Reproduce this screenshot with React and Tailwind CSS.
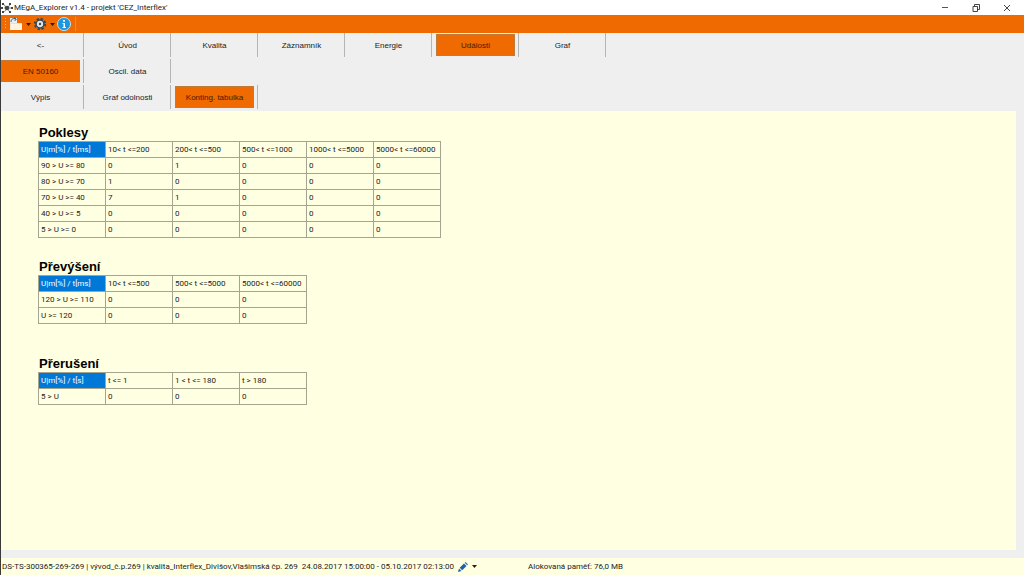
import React, { useState } from 'react';

const TABS = [
    ['<-', 'Úvod', 'Kvalita', 'Záznamník', 'Energie', 'Události', 'Graf'],
    ['EN 50160', 'Oscil. data'],
    ['Výpis', 'Graf odolnosti', 'Konting. tabulka'],
];

const DIPS = {
    title: 'Poklesy',
    head: ['U|m[%] / t[ms]', '10< t <=200', '200< t <=500', '500< t <=1000', '1000< t <=5000', '5000< t <=60000'],
    rows: [
        ['90 > U >= 80', 0, 1, 0, 0, 0],
        ['80 > U >= 70', 1, 0, 0, 0, 0],
        ['70 > U >= 40', 7, 1, 0, 0, 0],
        ['40 > U >= 5', 0, 0, 0, 0, 0],
        ['5 > U >= 0', 0, 0, 0, 0, 0],
    ],
};

const SWELLS = {
    title: 'Převýšení',
    head: ['U|m[%] / t[ms]', '10< t <=500', '500< t <=5000', '5000< t <=60000'],
    rows: [
        ['120 > U >= 110', 0, 0, 0],
        ['U >= 120', 0, 0, 0],
    ],
};

const INTERRUPTIONS = {
    title: 'Přerušení',
    head: ['U|m[%] / t[s]', 't <= 1', '1 < t <= 180', 't > 180'],
    rows: [['5 > U', 0, 0, 0]],
};

function AppIcon() {
    return (
        <svg viewBox="0 0 12 12" className="w-3 h-3 shrink-0" fill="#444">
            <path d="M3 5.500h7v1H3zM3 2l6 7.500-.7.5L2.300 2.500zM9 2L3 9.500l.7.5 6-7.500z" fill="#888" />
            <circle cx="6" cy="6" r="2.200" />
            <path d="M1 1h2v2H1zM0 5h2v2H0zM1 9h2v2H1zM8 1h2v2H8zM10 5h2v2h-2zM8 9h2v2H8z" />
        </svg>
    );
}

function TitleBar() {
    return (
        <header className="flex items-center justify-between h-[15px] pr-0.5 bg-white">
            <div className="flex items-center gap-px">
                <AppIcon />
                <h1 className="text-[8px] leading-3 whitespace-nowrap">MEgA_Explorer v1.4 - projekt 'CEZ_Interflex'</h1>
            </div>
            <div className="flex">
                <button aria-label="Minimalizovat" className="flex w-[31px] justify-center">
                    <svg viewBox="0 0 8 8" className="size-2" stroke="#555" fill="none"><path d="M1 3.500h6" /></svg>
                </button>
                <button aria-label="Obnovit" className="flex w-[31px] justify-center">
                    <svg viewBox="0 0 8 8" className="size-2" stroke="#444" fill="none"><path d="M1 2.5h4.5v5H1zM2.5 2.5v-2h5v5h-2" /></svg>
                </button>
                <button aria-label="Zavřít" className="flex w-[31px] justify-center">
                    <svg viewBox="0 0 8 8" className="size-2" stroke="#444" fill="none"><path d="M1 1l6 6M7 1L1 7" /></svg>
                </button>
            </div>
        </header>
    );
}

function Caret() {
    return <svg viewBox="0 0 5 3" className="w-[5px] h-[3px]" fill="#3b1a00"><path d="M0 0h5L2.5 3z" /></svg>;
}

function Toolbar() {
    return (
        <div className="flex items-center h-[18px] gap-0.5 pl-1 bg-[#ef6a00]">
            <svg viewBox="0 0 2 12" className="w-0.5 h-3" fill="#f9b98a"><path d="M0 0h1v1H0zM0 3h1v1H0zM0 6h1v1H0zM0 9h1v1H0z" /></svg>
            <button aria-label="Otevřít" className="flex items-center gap-[3px]">
                <svg viewBox="0 0 14 14" className="size-3.5">
                    <path d="M1 5h6l1 1h5v7H1z" fill="#f5dfc0" />
                    <path d="M2 7h11v6H1z" fill="#fff3df" />
                    <path d="M1 1h7v5H1z" fill="#e9eef2" />
                    <path d="M2 5c0-3 2-4 5-3M5 .8l2.3 1.3L5.6 4" fill="none" stroke="#456" strokeWidth="1" />
                </svg>
                <Caret />
            </button>
            <button aria-label="Nastavení" className="flex items-center gap-[3px]">
                <svg viewBox="0 0 14 14" className="size-3.5">
                    <circle cx="7" cy="7" r="5.200" fill="none" stroke="#34495a" strokeWidth="2" strokeDasharray="2.300 1.780" />
                    <circle cx="7" cy="7" r="3.900" fill="#e4e4e4" stroke="#34495a" strokeWidth="1.500" />
                    <circle cx="7" cy="7" r="1.200" fill="#34495a" />
                </svg>
                <Caret />
            </button>
            <button aria-label="Informace" className="pr-1 border-r border-[#f08a3c]">
                <svg viewBox="0 0 14 14" className="size-3.5">
                    <circle cx="7" cy="7" r="6.5" fill="#1b96df" stroke="#bfe0f5" />
                    <circle cx="7" cy="3.8" r="1.1" fill="#fff" />
                    <path d="M5.5 6H8v4h1v1H5.5v-1h1V7h-1z" fill="#fff" />
                </svg>
            </button>
        </div>
    );
}

function TabRow({ items, active, onSelect }) {
    return (
        <div className="flex">
            {items.map((label) => (
                <div key={label} className="w-[87px] h-[26px] pr-1">
                    <div className="h-6 pr-[3px] pt-px border-r border-[#b4b4b4]">
                        <button
                            onClick={() => onSelect(label)}
                            className={`block w-full h-[22px] pt-px text-[8px] leading-3 whitespace-nowrap ${label === active ? 'bg-[#ef6a00] border border-[#c07a3c] text-[#4a1a00]' : 'border border-transparent text-[#222]'}`}
                        >
                            {label}
                        </button>
                    </div>
                </div>
            ))}
        </div>
    );
}

function EventTable({ title, head, rows }) {
    return (
        <section>
            <h2 className="pl-px font-['Liberation_Sans',sans-serif] text-[13px] leading-4 font-bold text-black">{title}</h2>
            <table aria-label={title} className="table-fixed border-collapse w-px text-[8px] leading-3 text-[#222]">
                <thead>
                    <tr className="h-4">
                        {head.map((cell, i) => (
                            <th
                                key={cell}
                                className={`w-[67px] border border-[#a5a58f] p-0 pl-0.5 text-left font-normal whitespace-nowrap ${i === 0 ? 'bg-[#0078d7] text-white' : ''}`}
                            >
                                {cell}
                            </th>
                        ))}
                    </tr>
                </thead>
                <tbody>
                    {rows.map((row) => (
                        <tr key={row[0]} className="h-4">
                            {row.map((cell, i) => (
                                <td key={i} className="border border-[#a5a58f] p-0 pl-0.5 whitespace-nowrap">{cell}</td>
                            ))}
                        </tr>
                    ))}
                </tbody>
            </table>
        </section>
    );
}

function StatusBar() {
    return (
        <footer className="flex items-center h-[17px] pl-px bg-[#ffffe1] text-[8px] leading-3 whitespace-nowrap">
            <div className="flex items-center gap-1 w-[526px]">
                <span className="whitespace-pre">DS-TS-300365-269-269 | vývod_č.p.269 | kvalita_Interflex_Divišov,Vlašimská čp. 269  24.08.2017 15:00:00 - 05.10.2017 02:13:00</span>
                <button aria-label="Upravit" className="flex items-center gap-1">
                    <svg viewBox="0 0 10 10" className="size-2.5" fill="#1d5fa8">
                        <path d="M0 10l1-3.5L3.5 9zM1.7 5.8L6 1.5 8.5 4 4.200 8.300zM6.700.8l.8-.8L10 2.500l-.8.8z" />
                    </svg>
                    <Caret />
                </button>
            </div>
            <span>Alokovaná paměť: 76,0 MB</span>
        </footer>
    );
}

export default function App() {
    const [active, setActive] = useState(['Události', 'EN 50160', 'Konting. tabulka']);

    const select = (level, label) => setActive(active.map((a, i) => (i === level ? label : a)));

    return (
        <div className="flex flex-col min-h-screen border-l border-[#3a3a3a] bg-[#efefef] text-[#222] font-[Roboto,sans-serif]">
            <TitleBar />
            <Toolbar />
            <nav className="font-['Liberation_Sans',sans-serif]">
                {TABS.map((items, level) => (
                    <TabRow key={level} items={items} active={active[level]} onSelect={(label) => select(level, label)} />
                ))}
            </nav>
            <main className="flex-1 mr-2 mb-2 pl-[37px] pt-3.5 bg-[#ffffe1]">
                <EventTable {...DIPS} />
                <div className="mt-[21px]">
                    <EventTable {...SWELLS} />
                </div>
                <div className="mt-8">
                    <EventTable {...INTERRUPTIONS} />
                </div>
            </main>
            <StatusBar />
        </div>
    );
}
